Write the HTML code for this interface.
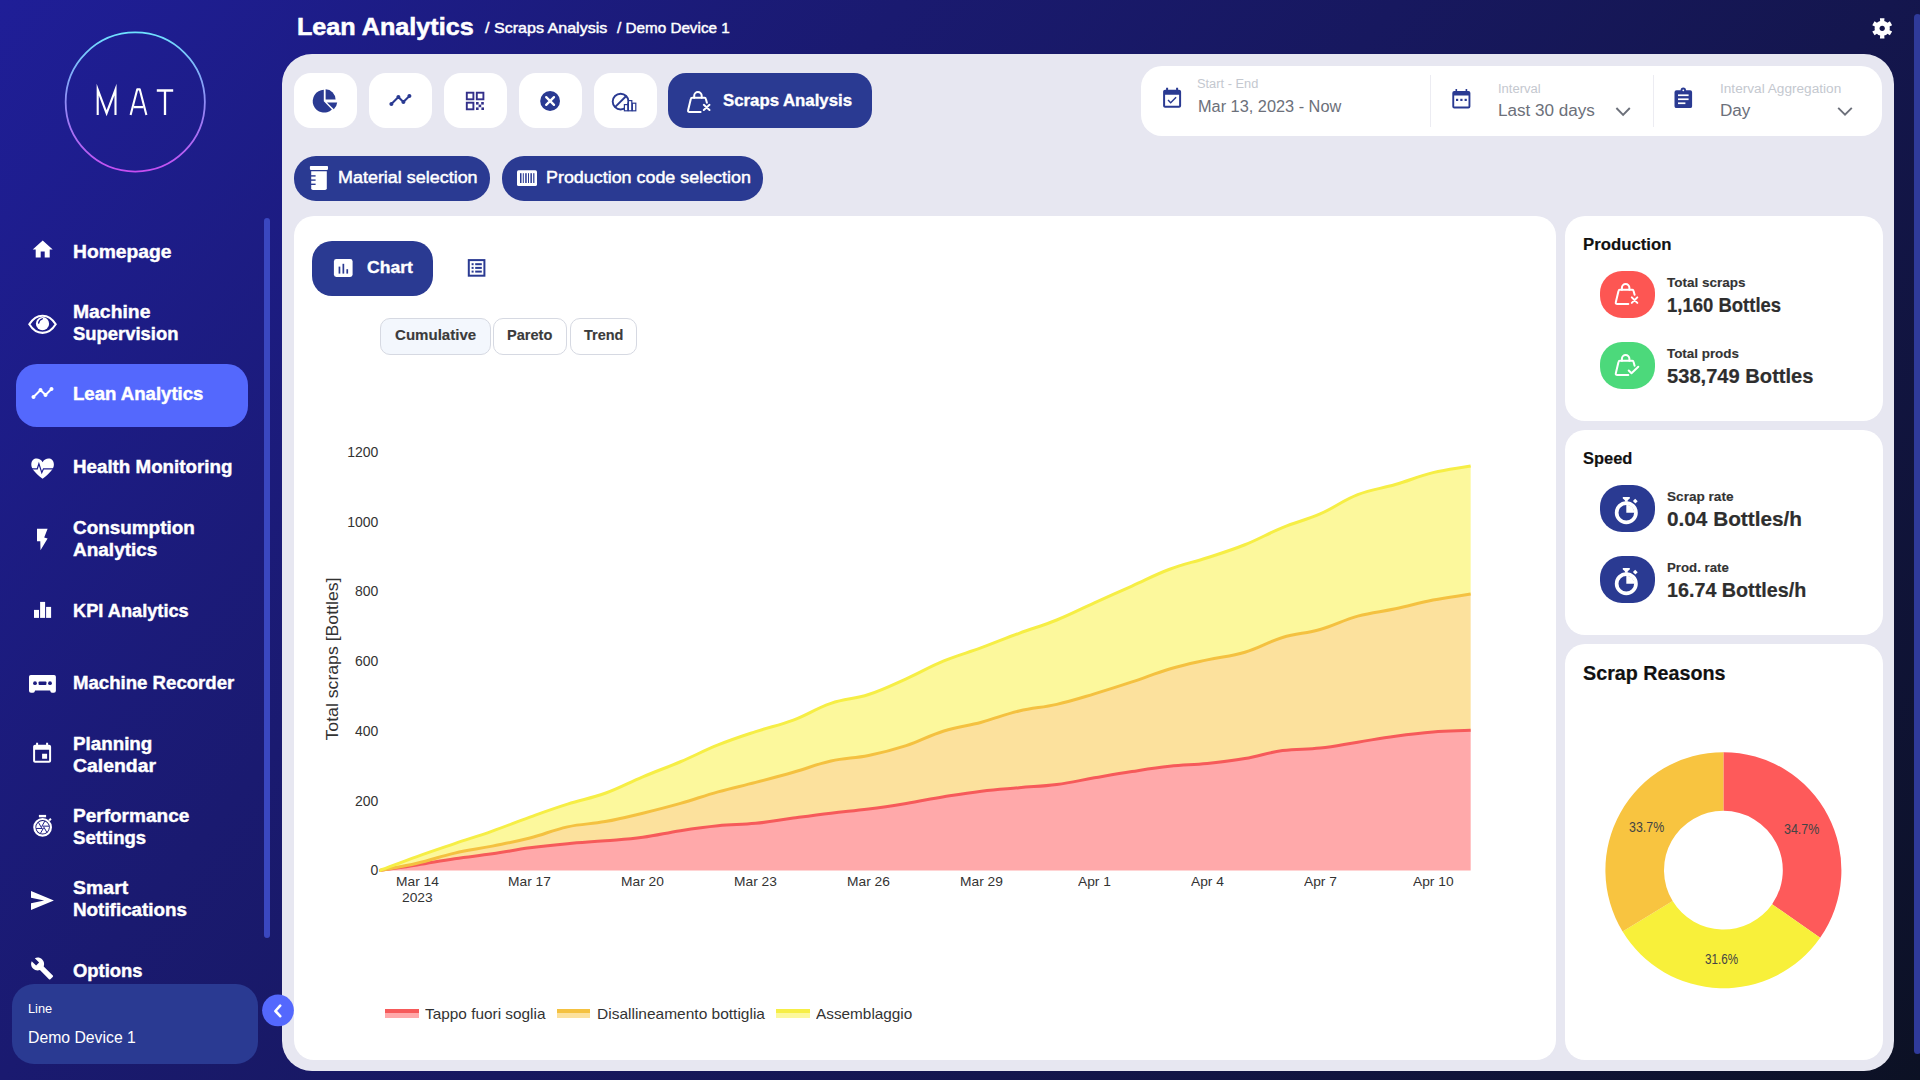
<!DOCTYPE html><html><head><meta charset="utf-8"><style>
html,body{margin:0;padding:0;width:1920px;height:1080px;overflow:hidden;}
body{background:linear-gradient(130deg,#1f1e97 0%,#1a1a70 32%,#14164e 67%,#0c1124 100%);font-family:"Liberation Sans",sans-serif;position:relative;}
.t{position:absolute;white-space:nowrap;line-height:1;transform-origin:0 0;}
.b{position:absolute;}
</style></head><body>
<div class="b" style="left:282px;top:54px;width:1612px;height:1017px;background:#e7e7f1;border-radius:30px;"></div>
<svg class="b" style="left:0px;top:0px;" width="282" height="200" viewBox="0 0 282 200"><defs><linearGradient id="lg" x1="0" y1="0" x2="0" y2="1"><stop offset="0" stop-color="#6fe3ff"/><stop offset="0.5" stop-color="#8f8cf5"/><stop offset="1" stop-color="#c64ef2"/></linearGradient></defs>
<circle cx="135.25" cy="102" r="69.6" fill="none" stroke="url(#lg)" stroke-width="1.8"/>
<g fill="none" stroke="#fff" stroke-linejoin="miter" stroke-miterlimit="10">
<path d="M97.7 115 V89.6 L106.6 113.2 L115.5 89.6 V115" stroke-width="2.1"/>
<path d="M130.6 115 L137.2 89.4 H139.8 L146.4 115" stroke-width="2.1" stroke-linejoin="round"/>
<path d="M133.5 107.1 H143.5" stroke-width="2.3"/>
<path d="M156.8 90.5 H173.2 M165 90.5 V115" stroke-width="2.3"/>
</g></svg>
<div class="b" style="left:264px;top:218px;width:6px;height:720px;background:#3a47c0;border-radius:3px;"></div>
<div class="b" style="left:16px;top:364px;width:232px;height:63px;background:#5468fd;border-radius:21px;"></div>
<div class="t" style="left:72.60px;top:243.00px;font-size:18px;font-weight:bold;color:#ffffff;transform:scaleX(1.0694);-webkit-text-stroke:0.40px #ffffff;">Homepage</div>
<div class="t" style="left:72.60px;top:303.00px;font-size:18px;font-weight:bold;color:#ffffff;transform:scaleX(1.0747);-webkit-text-stroke:0.40px #ffffff;">Machine</div>
<div class="t" style="left:72.60px;top:325.00px;font-size:18px;font-weight:bold;color:#ffffff;transform:scaleX(1.0230);-webkit-text-stroke:0.40px #ffffff;">Supervision</div>
<div class="t" style="left:72.60px;top:385.00px;font-size:18px;font-weight:bold;color:#ffffff;transform:scaleX(1.0318);-webkit-text-stroke:0.40px #ffffff;">Lean Analytics</div>
<div class="t" style="left:72.60px;top:458.00px;font-size:18px;font-weight:bold;color:#ffffff;transform:scaleX(1.0420);-webkit-text-stroke:0.40px #ffffff;">Health Monitoring</div>
<div class="t" style="left:72.60px;top:519.00px;font-size:18px;font-weight:bold;color:#ffffff;transform:scaleX(1.0502);-webkit-text-stroke:0.40px #ffffff;">Consumption</div>
<div class="t" style="left:72.60px;top:541.00px;font-size:18px;font-weight:bold;color:#ffffff;transform:scaleX(1.0546);-webkit-text-stroke:0.40px #ffffff;">Analytics</div>
<div class="t" style="left:72.60px;top:602.00px;font-size:18px;font-weight:bold;color:#ffffff;transform:scaleX(1.0116);-webkit-text-stroke:0.40px #ffffff;">KPI Analytics</div>
<div class="t" style="left:72.60px;top:674.00px;font-size:18px;font-weight:bold;color:#ffffff;transform:scaleX(1.0337);-webkit-text-stroke:0.40px #ffffff;">Machine Recorder</div>
<div class="t" style="left:72.60px;top:735.00px;font-size:18px;font-weight:bold;color:#ffffff;transform:scaleX(1.0435);-webkit-text-stroke:0.40px #ffffff;">Planning</div>
<div class="t" style="left:72.60px;top:757.00px;font-size:18px;font-weight:bold;color:#ffffff;transform:scaleX(1.0776);-webkit-text-stroke:0.40px #ffffff;">Calendar</div>
<div class="t" style="left:72.60px;top:807.00px;font-size:18px;font-weight:bold;color:#ffffff;transform:scaleX(1.0568);-webkit-text-stroke:0.40px #ffffff;">Performance</div>
<div class="t" style="left:72.60px;top:829.00px;font-size:18px;font-weight:bold;color:#ffffff;transform:scaleX(1.0308);-webkit-text-stroke:0.40px #ffffff;">Settings</div>
<div class="t" style="left:72.60px;top:879.00px;font-size:18px;font-weight:bold;color:#ffffff;transform:scaleX(1.0821);-webkit-text-stroke:0.40px #ffffff;">Smart</div>
<div class="t" style="left:72.60px;top:901.00px;font-size:18px;font-weight:bold;color:#ffffff;transform:scaleX(1.0467);-webkit-text-stroke:0.40px #ffffff;">Notifications</div>
<div class="t" style="left:72.60px;top:962.00px;font-size:18px;font-weight:bold;color:#ffffff;transform:scaleX(1.0237);-webkit-text-stroke:0.40px #ffffff;">Options</div>
<svg class="b" style="left:0px;top:0px;" width="282" height="1080" viewBox="0 0 282 1080"><g fill="#fff">
<path d="M10,20V14H14V20H19V12H22L12,3L2,12H5V20H10Z" transform="translate(30.7,237.6)"/>
<g transform="translate(42.5,324.3)">
 <path d="M-13.2 0 C-9 -6.8 -4.6 -8.6 0 -8.6 C4.6 -8.6 9 -6.8 13.2 0 C9 6.8 4.6 8.6 0 8.6 C-4.6 8.6 -9 6.8 -13.2 0 Z" fill="none" stroke="#fff" stroke-width="2.1"/>
 <circle cx="0" cy="-0.6" r="6.6"/>
 <path d="M-3.9 -1.2 C-3.6 -3.4 -2.2 -4.9 -0.2 -5.5" fill="none" stroke="#1f1e90" stroke-width="1.4" stroke-linecap="round"/>
</g>
<g transform="translate(30.5,381)"><path d="M23 8c0 1.1-.9 2-2 2-.18 0-.35-.02-.51-.07l-3.56 3.55c.05.16.07.34.07.52 0 1.1-.9 2-2 2s-2-.9-2-2c0-.18.02-.36.07-.52l-2.55-2.55c-.16.05-.34.07-.52.07s-.36-.02-.52-.07l-4.55 4.56c.05.16.07.33.07.51 0 1.1-.9 2-2 2s-2-.9-2-2 .9-2 2-2c.18 0 .35.02.51.07l4.56-4.55C8.02 9.36 8 9.18 8 9c0-1.1.9-2 2-2s2 .9 2 2c0 .18-.02.36-.07.52l2.55 2.55c.16-.05.34-.07.52-.07s.36.02.52.07l3.55-3.56C19.02 8.35 19 8.18 19 8c0-1.1.9-2 2-2s2 .9 2 2z"/></g>
<g transform="translate(42.6,468)">
 <path d="M0 -5.8 C-2.5 -10.8 -11.2 -11.2 -11.3 -3.6 C-11.3 0.8 -7.5 4.8 0 10.8 C7.5 4.8 11.3 0.8 11.3 -3.6 C11.2 -11.2 2.5 -10.8 0 -5.8 Z"/>
 <path d="M-11.5 0.8 H-5.3 L-3.7 -4.2 L-0.8 4.6 L0.9 0.8 H11.5" fill="none" stroke="#1f1e8e" stroke-width="1.2"/>
</g>
<path d="M37 528.8 H47.6 L44.2 537.4 L47.6 538.6 L40.5 550.2 L40.3 541.2 H37 Z"/>
<rect x="34" y="609.9" width="5" height="8"/><rect x="40.1" y="601.9" width="5" height="16"/><rect x="46.1" y="606.9" width="5" height="11"/>
<g>
 <path d="M30.8 674.9 H54.1 Q55.9 674.9 55.9 676.7 V690.8 Q55.9 692.8 53.9 692.8 H51.9 Q50.6 692.8 50.1 690.4 H35.1 Q34.6 692.8 33.2 692.8 H31 Q29 692.8 29 690.8 V676.7 Q29 674.9 30.8 674.9 Z"/>
 <circle cx="35" cy="683.2" r="1.9" fill="#1c1c80"/><circle cx="50" cy="683.2" r="1.9" fill="#1c1c80"/>
 <rect x="38.6" y="681.4" width="7.8" height="3.6" rx="0.8" fill="#1c1c80"/>
</g>
<g transform="translate(30.1,741.8)"><path d="M17 12h-5v5h5v-5zM16 1v2H8V1H6v2H5c-1.11 0-1.990.9-1.990 2L3 19c0 1.1.89 2 2 2h14c1.1 0 2-.9 2-2V5c0-1.1-.9-2-2-2h-1V1h-2zm3 18H5V8h14v11z"/></g>
<g>
 <rect x="38.9" y="814.9" width="7.2" height="2.4"/>
 <circle cx="42.6" cy="827.3" r="8.3" fill="none" stroke="#fff" stroke-width="2.2"/>
 <path d="M48.4 819.8 L50.3 818 L51.6 819.4 L49.8 821.2 Z"/>
 <circle cx="42.6" cy="827.3" r="6.3"/>
 <path d="M42.60 826.15 L49.10 826.15 M43.60 826.72 L46.85 832.35 M43.60 827.88 L40.35 833.50 M42.60 828.45 L36.10 828.45 M41.60 827.88 L38.35 822.25 M41.60 826.72 L44.85 821.10 " stroke="#1d1d86" stroke-width="1" fill="none"/>

</g>
<path d="M31 890.9 L53.9 900.5 L31 910.1 V903.2 L44.2 900.5 L31 897.8 Z"/>
<g transform="translate(30.1,956.5)"><path d="M22.7 19l-9.1-9.1c.9-2.3.4-5-1.5-6.9-2-2-5-2.4-7.4-1.3L9 6 6 9 1.6 4.7C.4 7.1.9 10.1 2.9 12.1c1.9 1.9 4.6 2.4 6.9 1.5l9.1 9.1c.4.4 1 .4 1.4 0l2.3-2.3c.5-.4.5-1.1.1-1.4z"/></g>
</g></svg>
<div class="b" style="left:12px;top:984px;width:246px;height:80px;background:#2a3a92;border-radius:22px;"></div>
<div class="t" style="left:27.80px;top:1002.00px;font-size:13px;font-weight:normal;color:#ffffff;transform:scaleX(0.9844);">Line</div>
<div class="t" style="left:27.80px;top:1030.00px;font-size:16px;font-weight:normal;color:#ffffff;transform:scaleX(0.9856);">Demo Device 1</div>
<svg class="b" style="left:260px;top:993px;" width="36" height="36" viewBox="0 0 36 36"><circle cx="18" cy="17.4" r="15.9" fill="#5468fd"/><path d="M20.2 12.6 L15.4 18 L20.2 23.2" fill="none" stroke="#fff" stroke-width="2.6" stroke-linecap="round" stroke-linejoin="round"/></svg>
<div class="t" style="left:297.30px;top:15.00px;font-size:24px;font-weight:bold;color:#ffffff;transform:scaleX(1.0486);-webkit-text-stroke:0.53px #ffffff;">Lean Analytics</div>
<div class="t" style="left:485.00px;top:20.00px;font-size:15px;font-weight:normal;color:#ffffff;transform:scaleX(1.0708);-webkit-text-stroke:0.45px #fff;">/ Scraps Analysis</div>
<div class="t" style="left:617.30px;top:20.00px;font-size:15px;font-weight:normal;color:#ffffff;transform:scaleX(1.0164);-webkit-text-stroke:0.45px #fff;">/ Demo Device 1</div>
<svg class="b" style="left:1860px;top:8px;" width="44" height="44" viewBox="0 0 44 44"><path d="M20.14 12.99 L19.93 10.15 L24.47 10.15 L24.26 12.99 L26.00 13.72 L27.50 14.86 L29.86 13.26 L32.12 17.19 L29.57 18.43 L29.80 20.30 L29.57 22.17 L32.12 23.41 L29.86 27.34 L27.50 25.74 L26.00 26.88 L24.26 27.61 L24.47 30.45 L19.93 30.45 L20.14 27.61 L18.40 26.88 L16.90 25.74 L14.54 27.34 L12.28 23.41 L14.83 22.17 L14.60 20.30 L14.83 18.43 L12.28 17.19 L14.54 13.26 L16.90 14.86 L18.40 13.72Z" fill="#fff"/><circle cx="22.2" cy="20.3" r="2.6" fill="#13144a"/></svg>
<div class="b" style="left:1914px;top:14px;width:7px;height:1040px;background:#2f3a9a;border-radius:4px;"></div>
<div class="b" style="left:294px;top:73px;width:63px;height:55px;background:#ffffff;border-radius:17px;"></div>
<div class="b" style="left:369px;top:73px;width:63px;height:55px;background:#ffffff;border-radius:17px;"></div>
<div class="b" style="left:444px;top:73px;width:63px;height:55px;background:#ffffff;border-radius:17px;"></div>
<div class="b" style="left:519px;top:73px;width:63px;height:55px;background:#ffffff;border-radius:17px;"></div>
<div class="b" style="left:594px;top:73px;width:63px;height:55px;background:#ffffff;border-radius:17px;"></div>
<svg class="b" style="left:0px;top:0px;" width="900" height="140" viewBox="0 0 900 140">
<g fill="#2a3a92">
 <path d="M323.8 89.8 V101.3 L331.9 109.5 A11.4 11.4 0 1 1 323.8 89.8 Z"/>
 <path d="M325.6 89.3 A10.3 10.3 0 0 1 335.6 99.6 H325.6 Z"/>
 <path d="M327 102.4 H337.2 A11.5 11.5 0 0 1 333.8 109.3 Z"/>
</g>
<g transform="translate(388.4,88)" fill="#2a3a92"><path d="M23 8c0 1.1-.9 2-2 2-.18 0-.35-.02-.51-.07l-3.56 3.55c.05.16.07.34.07.52 0 1.1-.9 2-2 2s-2-.9-2-2c0-.18.02-.36.07-.52l-2.55-2.55c-.16.05-.34.07-.52.07s-.36-.02-.52-.07l-4.55 4.56c.05.16.07.33.07.51 0 1.1-.9 2-2 2s-2-.9-2-2 .9-2 2-2c.18 0 .35.02.51.07l4.56-4.55C8.02 9.36 8 9.18 8 9c0-1.1.9-2 2-2s2 .9 2 2c0 .18-.02.36-.07.52l2.55 2.55c.16-.05.34-.07.52-.07s.36.02.52.07l3.55-3.56C19.02 8.35 19 8.18 19 8c0-1.1.9-2 2-2s2 .9 2 2z" /></g>
<g fill="none" stroke="#33308a" stroke-width="1.9">
 <rect x="466.8" y="92.7" width="6.6" height="6.6"/><rect x="476.8" y="92.7" width="6.6" height="6.6"/><rect x="466.8" y="102.7" width="6.6" height="6.6"/>
</g>
<g fill="#33308a">
 <rect x="476" y="102" width="2.6" height="2.6"/><rect x="481.2" y="102" width="2.6" height="2.6"/><rect x="478.6" y="104.6" width="2.6" height="2.6"/><rect x="476" y="107.4" width="2.6" height="2.6"/><rect x="481.4" y="107.4" width="2.6" height="2.6"/>
</g>
<circle cx="550.1" cy="101" r="9.9" fill="#2a3a92"/>
<path d="M546.2 97.1 L554 104.9 M554 97.1 L546.2 104.9" stroke="#fff" stroke-width="2.3" stroke-linecap="round"/>
<g fill="none" stroke="#2a3a92" stroke-width="1.9">
 <circle cx="620.6" cy="101.6" r="7.9"/><path d="M615 107.2 L626.2 96"/>
</g>
<g fill="#fff" stroke="#2a3a92" stroke-width="1.2">
 <rect x="624.4" y="104.6" width="3.4" height="6.2"/><rect x="628.4" y="100.6" width="3.4" height="10.2"/><rect x="632.4" y="103.2" width="3.4" height="7.6"/>
</g>
</svg>
<div class="b" style="left:668px;top:73px;width:204px;height:55px;background:#2a3a92;border-radius:18px;"></div>
<svg class="b" style="left:0px;top:0px;" width="900" height="140" viewBox="0 0 900 140"><g transform="translate(691,97.7)" fill="none" stroke="#fff" stroke-width="2.0" stroke-linecap="round" stroke-linejoin="round">
<path d="M9.6 14.3 H-1.4 Q-3.2 14.3 -2.9 12.6 L-0.2 1.2 Q0 0 1.2 0 H13.6 Q14.6 0 14.8 1 L15.9 5"/>
<path d="M3.2 0 V-1.95 A3.75 3.75 0 0 1 10.7 -1.95 V0"/>
<path d="M12.8 7.1 L18.5 12.3 M18.5 7.1 L12.8 12.3"/></g></svg>
<div class="t" style="left:723.00px;top:93.00px;font-size:16px;font-weight:bold;color:#ffffff;transform:scaleX(1.0486);-webkit-text-stroke:0.35px #ffffff;">Scraps Analysis</div>
<div class="b" style="left:1141px;top:66px;width:741px;height:70px;background:#ffffff;border-radius:21px;"></div>
<div class="b" style="left:1430px;top:74.5px;width:1.2000000000000455px;height:52.5px;background:#ececf2;border-radius:0px;"></div>
<div class="b" style="left:1652.5px;top:74.5px;width:1.2000000000000455px;height:52.5px;background:#ececf2;border-radius:0px;"></div>
<svg class="b" style="left:0px;top:0px;" width="1920" height="140" viewBox="0 0 1920 140">
<g transform="translate(1159.8,86.8)" fill="#2a3a92"><path d="M16.53 11.06L15.47 10l-4.88 4.88-2.12-2.12-1.06 1.06L10.59 17l5.94-5.94zM19 3h-1V1h-2v2H8V1H6v2H5c-1.11 0-1.99.9-1.99 2L3 19c0 1.1.89 2 2 2h14c1.1 0 2-.9 2-2V5c0-1.1-.9-2-2-2zm0 16H5V8h14v11z" transform="translate(0.3,0)"/></g>
<g fill="#2a3a92">
 <path d="M1454.3 91 H1468.4 Q1470.4 91 1470.4 93 V106.4 Q1470.4 108.4 1468.4 108.4 H1454.3 Q1452.3 108.4 1452.3 106.4 V93 Q1452.3 91 1454.3 91 Z M1454.2 95.4 V106.6 H1468.5 V95.4 Z" fill-rule="evenodd"/>
 <rect x="1455.5" y="89" width="1.6" height="3"/><rect x="1465.6" y="89" width="1.6" height="3"/>
 <rect x="1456" y="98.8" width="2.2" height="2.2"/><rect x="1460.3" y="98.8" width="2.2" height="2.2"/><rect x="1464.6" y="98.8" width="2.2" height="2.2"/>
</g>
<g fill="#2a3a92">
 <path d="M1676.5 90.2 H1680.6 A2.7 2.7 0 0 1 1686 90.2 H1690.2 Q1692.1 90.2 1692.1 92.2 V106.2 Q1692.1 108.1 1690.2 108.1 H1676.5 Q1674.5 108.1 1674.5 106.2 V92.2 Q1674.5 90.2 1676.5 90.2 Z"/>
 <circle cx="1683.3" cy="90.3" r="0.9" fill="#fff"/>
 <rect x="1678" y="94.4" width="10.6" height="1.7" fill="#fff"/><rect x="1678" y="98.4" width="10.6" height="1.7" fill="#fff"/><rect x="1678" y="102.4" width="7.4" height="1.7" fill="#fff"/>
</g>
<path d="M1616.4 108 L1623.1 114.8 L1629.8 108" fill="none" stroke="#6c707a" stroke-width="1.9"/>
<path d="M1838.2 107.8 L1845 114.6 L1851.8 107.8" fill="none" stroke="#6c707a" stroke-width="1.9"/>
</svg>
<div class="t" style="left:1197.20px;top:78.00px;font-size:12px;font-weight:normal;color:#c4c8cf;transform:scaleX(1.0687);">Start - End</div>
<div class="t" style="left:1197.50px;top:99.00px;font-size:16px;font-weight:normal;color:#6c707a;transform:scaleX(1.0195);">Mar 13, 2023 - Now</div>
<div class="t" style="left:1498.30px;top:83.00px;font-size:12.5px;font-weight:normal;color:#c4c8cf;transform:scaleX(1.0418);">Interval</div>
<div class="t" style="left:1498.30px;top:103.00px;font-size:16px;font-weight:normal;color:#6c707a;transform:scaleX(1.0681);">Last 30 days</div>
<div class="t" style="left:1719.90px;top:83.00px;font-size:12.5px;font-weight:normal;color:#c4c8cf;transform:scaleX(1.0901);">Interval Aggregation</div>
<div class="t" style="left:1720.00px;top:103.00px;font-size:16px;font-weight:normal;color:#6c707a;transform:scaleX(1.0686);">Day</div>
<div class="b" style="left:294px;top:156px;width:196px;height:44.5px;background:#2a3a92;border-radius:22px;"></div>
<div class="b" style="left:502px;top:156px;width:261px;height:44.5px;background:#2a3a92;border-radius:22px;"></div>
<svg class="b" style="left:0px;top:0px;" width="800" height="210" viewBox="0 0 800 210">
<g fill="#fff">
 <rect x="309.9" y="165.9" width="18.1" height="4" rx="0.8"/>
 <path d="M311.2 171.2 H326.8 V188.2 Q326.8 190 325 190 H313 Q311.2 190 311.2 188.2 Z"/>
</g>
<g fill="#2a3a92"><rect x="311" y="175.2" width="4.6" height="1.4"/><rect x="311" y="179.4" width="4.6" height="1.4"/><rect x="311" y="183.6" width="4.6" height="1.4"/></g>
<rect x="517" y="170.2" width="20" height="15.8" rx="1.6" fill="#fff"/>
<g fill="#2a3a92"><rect x="520" y="173.2" width="1.5" height="9.8"/><rect x="522.8" y="173.2" width="1" height="9.8"/><rect x="525.2" y="173.2" width="1.5" height="9.8"/><rect x="528" y="173.2" width="1" height="9.8"/><rect x="530.4" y="173.2" width="1.5" height="9.8"/><rect x="533.2" y="173.2" width="1.2" height="9.8"/></g>
</svg>
<div class="t" style="left:337.80px;top:170.00px;font-size:16px;font-weight:normal;color:#ffffff;transform:scaleX(1.1213);-webkit-text-stroke:0.45px #fff;">Material selection</div>
<div class="t" style="left:545.60px;top:170.00px;font-size:16px;font-weight:normal;color:#ffffff;transform:scaleX(1.1183);-webkit-text-stroke:0.45px #fff;">Production code selection</div>
<div class="b" style="left:294px;top:216px;width:1262px;height:844px;background:#ffffff;border-radius:20px;"></div>
<div class="b" style="left:1565px;top:216px;width:318px;height:205px;background:#ffffff;border-radius:20px;"></div>
<div class="b" style="left:1565px;top:430px;width:318px;height:205px;background:#ffffff;border-radius:20px;"></div>
<div class="b" style="left:1565px;top:644px;width:318px;height:416px;background:#ffffff;border-radius:20px;"></div>
<div class="b" style="left:312px;top:241px;width:121px;height:54.60000000000002px;background:#2a3a92;border-radius:20px;"></div>
<svg class="b" style="left:300px;top:230px;" width="200" height="70" viewBox="0 0 200 70"><rect x="33.9" y="29" width="18.7" height="17.9" rx="2.4" fill="#fff"/>
<g fill="#2a3a92"><rect x="38.6" y="36.6" width="1.7" height="7"/><rect x="42.5" y="33.8" width="1.7" height="9.8"/><rect x="46.4" y="39.2" width="1.7" height="4.4"/></g>
<g fill="none" stroke="#2a3a92"><rect x="168.8" y="30.1" width="15.6" height="15.6" stroke-width="2"/></g>
<g fill="#2a3a92"><rect x="171.6" y="33.2" width="2" height="2"/><rect x="175.2" y="33.2" width="6.6" height="2"/><rect x="171.6" y="36.9" width="2" height="2"/><rect x="175.2" y="36.9" width="6.6" height="2"/><rect x="171.6" y="40.6" width="2" height="2"/><rect x="175.2" y="40.6" width="6.6" height="2"/></g></svg>
<div class="t" style="left:367.20px;top:260.00px;font-size:16px;font-weight:bold;color:#ffffff;transform:scaleX(1.0963);-webkit-text-stroke:0.35px #ffffff;">Chart</div>
<div class="b" style="left:380.2px;top:318px;width:110.60000000000002px;height:37.19999999999999px;background:#f3f7fd;border-radius:10px;border:1px solid #d6d9e2;box-sizing:border-box;"></div>
<div class="b" style="left:493.2px;top:318px;width:74.00000000000006px;height:37.19999999999999px;background:#ffffff;border-radius:10px;border:1px solid #d6d9e2;box-sizing:border-box;"></div>
<div class="b" style="left:569.5px;top:318px;width:67.79999999999995px;height:37.19999999999999px;background:#ffffff;border-radius:10px;border:1px solid #d6d9e2;box-sizing:border-box;"></div>
<div class="t" style="left:394.50px;top:328.00px;font-size:14px;font-weight:bold;color:#3b3b3b;transform:scaleX(1.0761);-webkit-text-stroke:0.14px #3b3b3b;">Cumulative</div>
<div class="t" style="left:507.00px;top:328.00px;font-size:14px;font-weight:bold;color:#3b3b3b;transform:scaleX(1.0398);-webkit-text-stroke:0.14px #3b3b3b;">Pareto</div>
<div class="t" style="left:583.60px;top:328.00px;font-size:14px;font-weight:bold;color:#3b3b3b;transform:scaleX(1.0335);-webkit-text-stroke:0.14px #3b3b3b;">Trend</div>
<svg class="b" style="left:0px;top:0px;" width="1560" height="900" viewBox="0 0 1560 900"><path d="M379.40 870.60 C394.45 865.00 401.91 862.01 417.03 856.60 C432.02 851.23 439.59 848.77 454.66 843.65 C469.69 838.55 477.33 836.34 492.29 831.05 C507.43 825.70 514.80 822.46 529.92 817.05 C544.91 811.68 552.38 808.90 567.55 804.10 C582.48 799.38 590.49 798.58 605.18 793.25 C620.59 787.66 627.66 783.14 642.81 776.80 C657.76 770.54 665.51 768.07 680.44 761.75 C695.62 755.33 702.78 751.07 718.07 744.95 C732.88 739.03 740.54 736.65 755.70 731.65 C770.65 726.71 778.62 725.64 793.33 720.10 C808.73 714.30 815.42 708.57 830.96 703.30 C845.53 698.35 853.95 699.32 868.59 694.55 C884.05 689.52 891.32 685.45 906.22 678.80 C921.43 672.01 928.48 667.31 943.85 660.95 C958.58 654.85 966.50 653.16 981.48 647.65 C996.60 642.10 1003.99 638.85 1019.11 633.30 C1034.09 627.79 1041.96 625.98 1056.74 620.00 C1072.06 613.80 1079.29 609.65 1094.37 602.85 C1109.40 596.07 1116.95 592.77 1132.00 586.05 C1147.05 579.33 1154.23 575.05 1169.63 569.25 C1184.34 563.71 1192.29 562.57 1207.26 557.70 C1222.39 552.77 1230.13 550.65 1244.89 544.75 C1260.23 538.61 1267.22 533.86 1282.52 527.60 C1297.33 521.54 1305.51 520.35 1320.15 513.95 C1335.61 507.19 1342.12 500.82 1357.78 494.70 C1372.22 489.06 1380.45 488.93 1395.41 484.55 C1410.56 480.11 1417.75 476.42 1433.04 472.65 C1447.85 469.00 1455.62 468.66 1470.67 466.00 L1470.67 594.10 C1455.62 596.48 1447.99 597.13 1433.04 600.05 C1417.88 603.01 1410.52 605.57 1395.41 608.80 C1380.42 612.01 1372.53 612.10 1357.78 616.15 C1342.43 620.36 1335.48 625.10 1320.15 629.45 C1305.37 633.64 1297.21 633.06 1282.52 637.50 C1267.10 642.16 1260.32 647.61 1244.89 652.20 C1230.22 656.57 1222.25 656.55 1207.26 659.90 C1192.15 663.27 1184.47 664.65 1169.63 669.00 C1154.37 673.47 1147.11 676.96 1132.00 681.95 C1117.01 686.90 1109.50 689.35 1094.37 693.85 C1079.39 698.31 1071.96 700.88 1056.74 704.35 C1041.85 707.74 1033.96 707.48 1019.11 711.00 C1003.85 714.62 996.65 718.18 981.48 722.20 C966.55 726.16 958.57 726.36 943.85 730.95 C928.46 735.74 921.56 740.66 906.22 745.65 C891.46 750.46 883.81 752.34 868.59 755.45 C853.70 758.50 845.78 757.74 830.96 761.05 C815.67 764.46 808.44 767.96 793.33 772.25 C778.33 776.50 770.79 778.47 755.70 782.40 C740.68 786.31 733.01 787.68 718.07 791.85 C702.91 796.08 695.58 799.10 680.44 803.40 C665.48 807.64 657.93 809.54 642.81 813.20 C627.82 816.82 620.34 818.85 605.18 821.60 C590.24 824.31 582.36 823.61 567.55 826.85 C552.25 830.19 545.12 834.16 529.92 838.05 C515.02 841.86 507.38 843.08 492.29 846.10 C477.28 849.10 469.58 849.70 454.66 853.10 C439.47 856.56 432.21 859.72 417.03 863.25 C402.10 866.72 394.45 867.66 379.40 870.60 Z" fill="#fcf89c"/><path d="M379.40 870.60 C394.45 867.66 402.10 866.72 417.03 863.25 C432.21 859.72 439.47 856.56 454.66 853.10 C469.58 849.70 477.28 849.10 492.29 846.10 C507.38 843.08 515.02 841.86 529.92 838.05 C545.12 834.16 552.25 830.19 567.55 826.85 C582.36 823.61 590.24 824.31 605.18 821.60 C620.34 818.85 627.82 816.82 642.81 813.20 C657.93 809.54 665.48 807.64 680.44 803.40 C695.58 799.10 702.91 796.08 718.07 791.85 C733.01 787.68 740.68 786.31 755.70 782.40 C770.79 778.47 778.33 776.50 793.33 772.25 C808.44 767.96 815.67 764.46 830.96 761.05 C845.78 757.74 853.70 758.50 868.59 755.45 C883.81 752.34 891.46 750.46 906.22 745.65 C921.56 740.66 928.46 735.74 943.85 730.95 C958.57 726.36 966.55 726.16 981.48 722.20 C996.65 718.18 1003.85 714.62 1019.11 711.00 C1033.96 707.48 1041.85 707.74 1056.74 704.35 C1071.96 700.88 1079.39 698.31 1094.37 693.85 C1109.50 689.35 1117.01 686.90 1132.00 681.95 C1147.11 676.96 1154.37 673.47 1169.63 669.00 C1184.47 664.65 1192.15 663.27 1207.26 659.90 C1222.25 656.55 1230.22 656.57 1244.89 652.20 C1260.32 647.61 1267.10 642.16 1282.52 637.50 C1297.21 633.06 1305.37 633.64 1320.15 629.45 C1335.48 625.10 1342.43 620.36 1357.78 616.15 C1372.53 612.10 1380.42 612.01 1395.41 608.80 C1410.52 605.57 1417.88 603.01 1433.04 600.05 C1447.99 597.13 1455.62 596.48 1470.67 594.10 L1470.67 730.25 C1455.62 730.95 1448.05 730.81 1433.04 732.00 C1417.95 733.19 1410.42 734.18 1395.41 736.20 C1380.31 738.24 1372.83 739.77 1357.78 742.15 C1342.73 744.53 1335.28 746.41 1320.15 748.10 C1305.18 749.77 1297.42 748.47 1282.52 750.55 C1267.32 752.67 1260.05 755.99 1244.89 758.60 C1229.94 761.17 1222.35 761.96 1207.26 763.50 C1192.25 765.04 1184.63 764.70 1169.63 766.30 C1154.53 767.92 1147.02 769.24 1132.00 771.55 C1116.92 773.86 1109.41 775.26 1094.37 777.85 C1079.31 780.44 1071.88 782.53 1056.74 784.50 C1041.78 786.45 1034.16 786.32 1019.11 787.65 C1004.05 788.98 996.48 789.34 981.48 791.15 C966.38 792.98 958.87 794.31 943.85 796.75 C928.76 799.21 921.31 800.94 906.22 803.40 C891.20 805.84 883.68 807.04 868.59 809.00 C853.57 810.96 846.00 811.38 830.96 813.20 C815.89 815.02 808.37 816.07 793.33 818.10 C778.27 820.13 770.81 821.80 755.70 823.35 C740.70 824.88 733.07 824.33 718.07 825.80 C702.97 827.27 695.44 828.40 680.44 830.70 C665.34 833.02 657.95 835.31 642.81 837.35 C627.84 839.37 620.24 839.59 605.18 840.85 C590.14 842.11 582.58 842.25 567.55 843.65 C552.47 845.05 544.93 845.83 529.92 847.85 C514.82 849.89 507.37 851.63 492.29 853.80 C477.27 855.97 469.67 856.47 454.66 858.70 C439.57 860.95 432.10 862.62 417.03 865.00 C402.00 867.38 394.45 868.36 379.40 870.60 Z" fill="#fce19d"/><path d="M379.40 870.60 C394.45 868.36 402.00 867.38 417.03 865.00 C432.10 862.62 439.57 860.95 454.66 858.70 C469.67 856.47 477.27 855.97 492.29 853.80 C507.37 851.63 514.82 849.89 529.92 847.85 C544.93 845.83 552.47 845.05 567.55 843.65 C582.58 842.25 590.14 842.11 605.18 840.85 C620.24 839.59 627.84 839.37 642.81 837.35 C657.95 835.31 665.34 833.02 680.44 830.70 C695.44 828.40 702.97 827.27 718.07 825.80 C733.07 824.33 740.70 824.88 755.70 823.35 C770.81 821.80 778.27 820.13 793.33 818.10 C808.37 816.07 815.89 815.02 830.96 813.20 C846.00 811.38 853.57 810.96 868.59 809.00 C883.68 807.04 891.20 805.84 906.22 803.40 C921.31 800.94 928.76 799.21 943.85 796.75 C958.87 794.31 966.38 792.98 981.48 791.15 C996.48 789.34 1004.05 788.98 1019.11 787.65 C1034.16 786.32 1041.78 786.45 1056.74 784.50 C1071.88 782.53 1079.31 780.44 1094.37 777.85 C1109.41 775.26 1116.92 773.86 1132.00 771.55 C1147.02 769.24 1154.53 767.92 1169.63 766.30 C1184.63 764.70 1192.25 765.04 1207.26 763.50 C1222.35 761.96 1229.94 761.17 1244.89 758.60 C1260.05 755.99 1267.32 752.67 1282.52 750.55 C1297.42 748.47 1305.18 749.77 1320.15 748.10 C1335.28 746.41 1342.73 744.53 1357.78 742.15 C1372.83 739.77 1380.31 738.24 1395.41 736.20 C1410.42 734.18 1417.95 733.19 1433.04 732.00 C1448.05 730.81 1455.62 730.95 1470.67 730.25 L1470.67 870.6 L379.4 870.6 Z" fill="#ffa9aa"/><path d="M379.40 870.60 C394.45 868.36 402.00 867.38 417.03 865.00 C432.10 862.62 439.57 860.95 454.66 858.70 C469.67 856.47 477.27 855.97 492.29 853.80 C507.37 851.63 514.82 849.89 529.92 847.85 C544.93 845.83 552.47 845.05 567.55 843.65 C582.58 842.25 590.14 842.11 605.18 840.85 C620.24 839.59 627.84 839.37 642.81 837.35 C657.95 835.31 665.34 833.02 680.44 830.70 C695.44 828.40 702.97 827.27 718.07 825.80 C733.07 824.33 740.70 824.88 755.70 823.35 C770.81 821.80 778.27 820.13 793.33 818.10 C808.37 816.07 815.89 815.02 830.96 813.20 C846.00 811.38 853.57 810.96 868.59 809.00 C883.68 807.04 891.20 805.84 906.22 803.40 C921.31 800.94 928.76 799.21 943.85 796.75 C958.87 794.31 966.38 792.98 981.48 791.15 C996.48 789.34 1004.05 788.98 1019.11 787.65 C1034.16 786.32 1041.78 786.45 1056.74 784.50 C1071.88 782.53 1079.31 780.44 1094.37 777.85 C1109.41 775.26 1116.92 773.86 1132.00 771.55 C1147.02 769.24 1154.53 767.92 1169.63 766.30 C1184.63 764.70 1192.25 765.04 1207.26 763.50 C1222.35 761.96 1229.94 761.17 1244.89 758.60 C1260.05 755.99 1267.32 752.67 1282.52 750.55 C1297.42 748.47 1305.18 749.77 1320.15 748.10 C1335.28 746.41 1342.73 744.53 1357.78 742.15 C1372.83 739.77 1380.31 738.24 1395.41 736.20 C1410.42 734.18 1417.95 733.19 1433.04 732.00 C1448.05 730.81 1455.62 730.95 1470.67 730.25" fill="none" stroke="#f65a5a" stroke-width="3"/><path d="M379.40 870.60 C394.45 867.66 402.10 866.72 417.03 863.25 C432.21 859.72 439.47 856.56 454.66 853.10 C469.58 849.70 477.28 849.10 492.29 846.10 C507.38 843.08 515.02 841.86 529.92 838.05 C545.12 834.16 552.25 830.19 567.55 826.85 C582.36 823.61 590.24 824.31 605.18 821.60 C620.34 818.85 627.82 816.82 642.81 813.20 C657.93 809.54 665.48 807.64 680.44 803.40 C695.58 799.10 702.91 796.08 718.07 791.85 C733.01 787.68 740.68 786.31 755.70 782.40 C770.79 778.47 778.33 776.50 793.33 772.25 C808.44 767.96 815.67 764.46 830.96 761.05 C845.78 757.74 853.70 758.50 868.59 755.45 C883.81 752.34 891.46 750.46 906.22 745.65 C921.56 740.66 928.46 735.74 943.85 730.95 C958.57 726.36 966.55 726.16 981.48 722.20 C996.65 718.18 1003.85 714.62 1019.11 711.00 C1033.96 707.48 1041.85 707.74 1056.74 704.35 C1071.96 700.88 1079.39 698.31 1094.37 693.85 C1109.50 689.35 1117.01 686.90 1132.00 681.95 C1147.11 676.96 1154.37 673.47 1169.63 669.00 C1184.47 664.65 1192.15 663.27 1207.26 659.90 C1222.25 656.55 1230.22 656.57 1244.89 652.20 C1260.32 647.61 1267.10 642.16 1282.52 637.50 C1297.21 633.06 1305.37 633.64 1320.15 629.45 C1335.48 625.10 1342.43 620.36 1357.78 616.15 C1372.53 612.10 1380.42 612.01 1395.41 608.80 C1410.52 605.57 1417.88 603.01 1433.04 600.05 C1447.99 597.13 1455.62 596.48 1470.67 594.10" fill="none" stroke="#f4c140" stroke-width="3"/><path d="M379.40 870.60 C394.45 865.00 401.91 862.01 417.03 856.60 C432.02 851.23 439.59 848.77 454.66 843.65 C469.69 838.55 477.33 836.34 492.29 831.05 C507.43 825.70 514.80 822.46 529.92 817.05 C544.91 811.68 552.38 808.90 567.55 804.10 C582.48 799.38 590.49 798.58 605.18 793.25 C620.59 787.66 627.66 783.14 642.81 776.80 C657.76 770.54 665.51 768.07 680.44 761.75 C695.62 755.33 702.78 751.07 718.07 744.95 C732.88 739.03 740.54 736.65 755.70 731.65 C770.65 726.71 778.62 725.64 793.33 720.10 C808.73 714.30 815.42 708.57 830.96 703.30 C845.53 698.35 853.95 699.32 868.59 694.55 C884.05 689.52 891.32 685.45 906.22 678.80 C921.43 672.01 928.48 667.31 943.85 660.95 C958.58 654.85 966.50 653.16 981.48 647.65 C996.60 642.10 1003.99 638.85 1019.11 633.30 C1034.09 627.79 1041.96 625.98 1056.74 620.00 C1072.06 613.80 1079.29 609.65 1094.37 602.85 C1109.40 596.07 1116.95 592.77 1132.00 586.05 C1147.05 579.33 1154.23 575.05 1169.63 569.25 C1184.34 563.71 1192.29 562.57 1207.26 557.70 C1222.39 552.77 1230.13 550.65 1244.89 544.75 C1260.23 538.61 1267.22 533.86 1282.52 527.60 C1297.33 521.54 1305.51 520.35 1320.15 513.95 C1335.61 507.19 1342.12 500.82 1357.78 494.70 C1372.22 489.06 1380.45 488.93 1395.41 484.55 C1410.56 480.11 1417.75 476.42 1433.04 472.65 C1447.85 469.00 1455.62 468.66 1470.67 466.00" fill="none" stroke="#f6ee45" stroke-width="3"/></svg>
<div class="t" style="left:370.52px;top:863.00px;font-size:14px;font-weight:normal;color:#333333;">0</div>
<div class="t" style="left:354.95px;top:794.00px;font-size:14px;font-weight:normal;color:#333333;">200</div>
<div class="t" style="left:354.95px;top:724.00px;font-size:14px;font-weight:normal;color:#333333;">400</div>
<div class="t" style="left:354.95px;top:654.00px;font-size:14px;font-weight:normal;color:#333333;">600</div>
<div class="t" style="left:354.95px;top:584.00px;font-size:14px;font-weight:normal;color:#333333;">800</div>
<div class="t" style="left:347.15px;top:515.00px;font-size:14px;font-weight:normal;color:#333333;">1000</div>
<div class="t" style="left:347.15px;top:445.00px;font-size:14px;font-weight:normal;color:#333333;">1200</div>
<div class="t" style="left:395.59px;top:875.00px;font-size:13px;font-weight:normal;color:#333333;transform:scaleX(1.0600);">Mar 14</div>
<div class="t" style="left:508.48px;top:875.00px;font-size:13px;font-weight:normal;color:#333333;transform:scaleX(1.0600);">Mar 17</div>
<div class="t" style="left:621.37px;top:875.00px;font-size:13px;font-weight:normal;color:#333333;transform:scaleX(1.0600);">Mar 20</div>
<div class="t" style="left:734.26px;top:875.00px;font-size:13px;font-weight:normal;color:#333333;transform:scaleX(1.0600);">Mar 23</div>
<div class="t" style="left:847.15px;top:875.00px;font-size:13px;font-weight:normal;color:#333333;transform:scaleX(1.0600);">Mar 26</div>
<div class="t" style="left:960.04px;top:875.00px;font-size:13px;font-weight:normal;color:#333333;transform:scaleX(1.0600);">Mar 29</div>
<div class="t" style="left:1077.90px;top:875.00px;font-size:13px;font-weight:normal;color:#333333;transform:scaleX(1.0600);">Apr 1</div>
<div class="t" style="left:1190.79px;top:875.00px;font-size:13px;font-weight:normal;color:#333333;transform:scaleX(1.0600);">Apr 4</div>
<div class="t" style="left:1303.68px;top:875.00px;font-size:13px;font-weight:normal;color:#333333;transform:scaleX(1.0600);">Apr 7</div>
<div class="t" style="left:1412.74px;top:875.00px;font-size:13px;font-weight:normal;color:#333333;transform:scaleX(1.0600);">Apr 10</div>
<div class="t" style="left:402.00px;top:891.00px;font-size:13px;font-weight:normal;color:#333333;transform:scaleX(1.0614);">2023</div>
<div class="t" style="left:333px;top:658.5px;font-size:16px;color:#333;transform:translate(-50%,-50%) rotate(-90deg) scaleX(1.104);transform-origin:50% 50%;">Total scraps [Bottles]</div>
<div class="b" style="left:385px;top:1009.2px;width:33.80000000000001px;height:9.0px;background:#ffa9aa;border-radius:0px;border-top:4px solid #f65a5a;box-sizing:border-box;"></div>
<div class="b" style="left:556.7px;top:1009.2px;width:33.799999999999955px;height:9.0px;background:#fce19d;border-radius:0px;border-top:4px solid #f4c140;box-sizing:border-box;"></div>
<div class="b" style="left:776px;top:1009.2px;width:33.799999999999955px;height:9.0px;background:#fcf89c;border-radius:0px;border-top:4px solid #f6ee45;box-sizing:border-box;"></div>
<div class="t" style="left:425.00px;top:1006.00px;font-size:15px;font-weight:normal;color:#333333;transform:scaleX(1.0248);">Tappo fuori soglia</div>
<div class="t" style="left:596.80px;top:1006.00px;font-size:15px;font-weight:normal;color:#333333;transform:scaleX(1.0332);">Disallineamento bottiglia</div>
<div class="t" style="left:816.20px;top:1006.00px;font-size:15px;font-weight:normal;color:#333333;transform:scaleX(1.0221);">Assemblaggio</div>
<div class="t" style="left:1583.00px;top:237.00px;font-size:16px;font-weight:bold;color:#111111;transform:scaleX(1.0470);-webkit-text-stroke:0.16px #111111;">Production</div>
<div class="b" style="left:1600px;top:271px;width:55px;height:47px;background:#fd5653;border-radius:22px;"></div>
<div class="b" style="left:1600px;top:342px;width:55px;height:47px;background:#4cd97b;border-radius:22px;"></div>
<svg class="b" style="left:1600px;top:271px;" width="55" height="47" viewBox="0 0 55 47"><g transform="translate(18.7,18.7)" fill="none" stroke="#fff" stroke-width="2.0" stroke-linecap="round" stroke-linejoin="round">
<path d="M9.6 14.3 H-1.4 Q-3.2 14.3 -2.9 12.6 L-0.2 1.2 Q0 0 1.2 0 H13.6 Q14.6 0 14.8 1 L15.9 5"/>
<path d="M3.2 0 V-1.95 A3.75 3.75 0 0 1 10.7 -1.95 V0"/>
<path d="M13.1 7.7 L18.6 13.2 M18.6 7.7 L13.1 13.2"/></g></svg>
<svg class="b" style="left:1600px;top:342px;" width="55" height="47" viewBox="0 0 55 47"><g transform="translate(18.7,18.7)" fill="none" stroke="#fff" stroke-width="2.0" stroke-linecap="round" stroke-linejoin="round">
<path d="M9.6 14.3 H-1.4 Q-3.2 14.3 -2.9 12.6 L-0.2 1.2 Q0 0 1.2 0 H13.6 Q14.6 0 14.8 1 L15.9 5"/>
<path d="M3.2 0 V-1.95 A3.75 3.75 0 0 1 10.7 -1.95 V0"/>
<path d="M10 9.8 L12.8 12.6 L19.6 6.1"/></g></svg>
<div class="t" style="left:1667.10px;top:276.00px;font-size:13px;font-weight:bold;color:#333333;transform:scaleX(1.0367);-webkit-text-stroke:0.13px #333333;">Total scraps</div>
<div class="t" style="left:1667.00px;top:295.00px;font-size:20px;font-weight:bold;color:#2e2e2e;transform:scaleX(0.9248);-webkit-text-stroke:0.20px #2e2e2e;">1,160 Bottles</div>
<div class="t" style="left:1667.10px;top:347.00px;font-size:13px;font-weight:bold;color:#333333;transform:scaleX(1.0299);-webkit-text-stroke:0.13px #333333;">Total prods</div>
<div class="t" style="left:1667.00px;top:366.00px;font-size:20px;font-weight:bold;color:#2e2e2e;transform:scaleX(1.0059);-webkit-text-stroke:0.20px #2e2e2e;">538,749 Bottles</div>
<div class="t" style="left:1583.00px;top:451.00px;font-size:16px;font-weight:bold;color:#111111;transform:scaleX(1.0288);-webkit-text-stroke:0.16px #111111;">Speed</div>
<div class="b" style="left:1600px;top:485px;width:55px;height:47px;background:#2a3a92;border-radius:22px;"></div>
<div class="b" style="left:1600px;top:556px;width:55px;height:47px;background:#2a3a92;border-radius:22px;"></div>
<svg class="b" style="left:0px;top:0px;" width="1920" height="640" viewBox="0 0 1920 640"><g transform="translate(1626.3,512.7)" fill="#fff">
<circle cx="0" cy="0" r="9.65" fill="none" stroke="#fff" stroke-width="3.7"/>
<path d="M0 0 V-8 A8 8 0 0 1 8 0 Z"/>
<path d="M-3.5 -15.7 H3.5 V-14.2 L1.4 -12.4 V-11 H-1.4 V-12.4 L-3.5 -14.2 Z"/>
<path d="M6.6 -11.6 L8.9 -13.9 L11.4 -11.4 L9.1 -9.1 Z"/>
</g><g transform="translate(1626.3,583.7)" fill="#fff">
<circle cx="0" cy="0" r="9.65" fill="none" stroke="#fff" stroke-width="3.7"/>
<path d="M0 0 V-8 A8 8 0 0 1 8 0 Z"/>
<path d="M-3.5 -15.7 H3.5 V-14.2 L1.4 -12.4 V-11 H-1.4 V-12.4 L-3.5 -14.2 Z"/>
<path d="M6.6 -11.6 L8.9 -13.9 L11.4 -11.4 L9.1 -9.1 Z"/>
</g></svg>
<div class="t" style="left:1667.10px;top:490.00px;font-size:13px;font-weight:bold;color:#333333;transform:scaleX(1.0457);-webkit-text-stroke:0.13px #333333;">Scrap rate</div>
<div class="t" style="left:1667.00px;top:509.00px;font-size:20px;font-weight:bold;color:#2e2e2e;transform:scaleX(1.0381);-webkit-text-stroke:0.20px #2e2e2e;">0.04 Bottles/h</div>
<div class="t" style="left:1667.10px;top:561.00px;font-size:13px;font-weight:bold;color:#333333;transform:scaleX(1.0184);-webkit-text-stroke:0.13px #333333;">Prod. rate</div>
<div class="t" style="left:1667.00px;top:580.00px;font-size:20px;font-weight:bold;color:#2e2e2e;transform:scaleX(0.9861);-webkit-text-stroke:0.20px #2e2e2e;">16.74 Bottles/h</div>
<div class="t" style="left:1583.40px;top:663.00px;font-size:20px;font-weight:bold;color:#111111;transform:scaleX(0.9867);-webkit-text-stroke:0.20px #111111;">Scrap Reasons</div>
<svg class="b" style="left:0px;top:0px;pointer-events:none;" width="1920" height="1080" viewBox="0 0 1920 1080"><path d="M1723.40 752.20 A118 118 0 0 1 1820.15 937.75 L1772.11 904.20 A59.4 59.4 0 0 0 1723.40 810.80 Z" fill="#fe5a5a"/><path d="M1820.15 937.75 A118 118 0 0 1 1622.60 931.54 L1672.66 901.08 A59.4 59.4 0 0 0 1772.11 904.20 Z" fill="#f8f03a"/><path d="M1622.60 931.54 A118 118 0 0 1 1723.40 752.20 L1723.40 810.80 A59.4 59.4 0 0 0 1672.66 901.08 Z" fill="#f8c440"/></svg>
<div class="t" style="left:1784.20px;top:822.00px;font-size:14px;font-weight:normal;color:#444444;transform:scaleX(0.8894);">34.7%</div>
<div class="t" style="left:1629.00px;top:820.00px;font-size:14px;font-weight:normal;color:#444444;transform:scaleX(0.8869);">33.7%</div>
<div class="t" style="left:1704.50px;top:952.00px;font-size:14px;font-weight:normal;color:#444444;transform:scaleX(0.8340);">31.6%</div>
</body></html>
